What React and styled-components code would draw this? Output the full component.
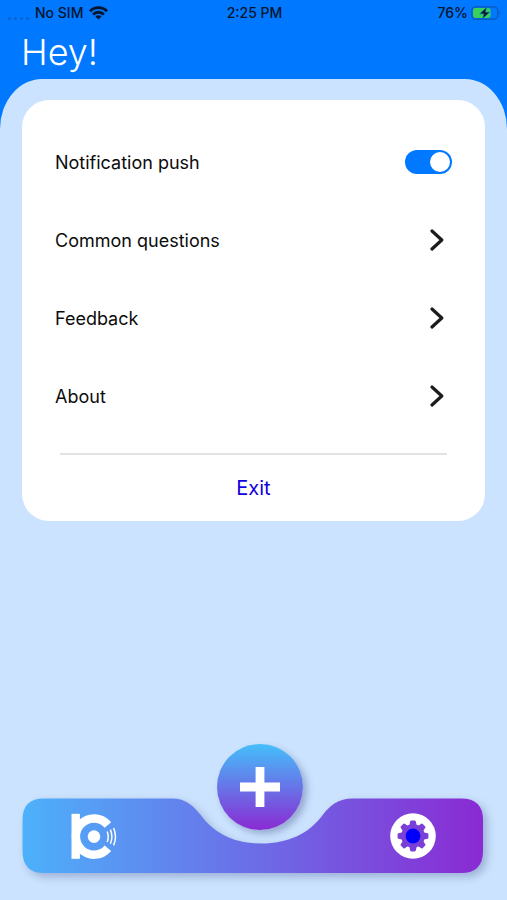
import React, { useState } from "react";
import styled, { createGlobalStyle } from "styled-components";

const LINKS = ["Common questions", "Feedback", "About"];

const Wifi = () => (
  <svg width="19" height="14" viewBox="0 0 19 14" aria-hidden="true">
    <g fill="none" stroke="#06142c" strokeWidth="2.8">
      <path d="M1 5.2 A12 12 0 0 1 18 5.2" />
      <path d="M4.1 8.5 A7.6 7.6 0 0 1 14.9 8.5" />
    </g>
    <path d="M6.4 10.5 A4.4 4.4 0 0 1 12.6 10.5 L9.5 13.6 Z" fill="#06142c" />
  </svg>
);

const Battery = () => (
  <svg width="30" height="14" viewBox="0 0 30 14" aria-hidden="true">
    <rect
      x="0.8"
      y="0.8"
      width="26"
      height="12.4"
      rx="3.6"
      fill="none"
      stroke="#0b57b4"
      strokeWidth="1.2"
    />
    <path d="M28.4 5 Q30 7 28.4 9 Z" fill="#0b57b4" />
    <rect x="2" y="2" width="17.6" height="10" rx="2.4" fill="#38d15c" />
    <path
      d="M15.6 1.4 L8.8 7.8 H13 L11.6 12.6 L18.6 6.2 H14.3 Z"
      fill="#06142c"
      stroke="#0b6fd0"
      strokeWidth="0.5"
    />
  </svg>
);

const Chevron = () => (
  <svg width="14" height="22" viewBox="0 0 14 22" aria-hidden="true">
    <path
      d="M2 2 L11.8 11 L2 20"
      fill="none"
      stroke="#1c1c1e"
      strokeWidth="3.2"
      strokeLinecap="round"
      strokeLinejoin="round"
    />
  </svg>
);

const Logo = () => (
  <svg width="46" height="46" viewBox="0 0 46 46" aria-hidden="true">
    <rect x="0.5" y="0.8" width="8.4" height="45" fill="#fff" />
    <path
      d="M36.9 12 A18.1 18.1 0 1 0 36.9 35.2"
      fill="none"
      stroke="#fff"
      strokeWidth="8.4"
    />
    <circle cx="23" cy="23.6" r="6.3" fill="#fff" />
    <g fill="none" stroke="#fff" strokeWidth="1.5">
      <path d="M36.2 18.4 A14.6 14.6 0 0 1 36.2 29" />
      <path d="M39.4 16.6 A18.4 18.4 0 0 1 39.4 30.8" />
      <path d="M42.6 15 A22 22 0 0 1 42.6 32.4" />
    </g>
  </svg>
);

const Gear = () => (
  <svg width="46" height="46" viewBox="0 0 46 46" aria-hidden="true">
    <circle cx="23" cy="23" r="22.8" fill="#fff" />
    <g fill="#7a3fd9">
      <circle cx="23" cy="23" r="11.8" />
      {[0, 45, 90, 135, 180, 225, 270, 315].map((angle) => (
        <path
          key={angle}
          d="M19.2 13 L20.2 8.4 Q20.4 7.6 21.2 7.6 H24.8 Q25.6 7.6 25.8 8.4 L26.8 13 Z"
          transform={`rotate(${angle} 23 23)`}
        />
      ))}
    </g>
    <circle cx="23" cy="23" r="7.4" fill="#0000fa" />
  </svg>
);

const Plus = () => (
  <svg width="40" height="40" viewBox="0 0 40 40" aria-hidden="true">
    <path d="M15.6 0 H24.4 V15.6 H40 V24.4 H24.4 V40 H15.6 V24.4 H0 V15.6 H15.6 Z" fill="#fff" />
  </svg>
);

const BottomNav = () => (
  <NavWrapper>
    <NavShape viewBox="0 0 461 75" preserveAspectRatio="xMinYMid meet" aria-hidden="true">
      <defs>
        <linearGradient id="bar" x1="0" x2="1" y1="0" y2="0">
          <stop offset="0" stopColor="#4db1fb" />
          <stop offset="1" stopColor="#8a2ad3" />
        </linearGradient>
      </defs>
      <path
        d="M22 0.5 H150 C164 0.5 172 8 181 20 C194 36 213 45.5 239 45.5 C267 45.5 287 35 300 18 C308 7 316 0.5 331 0.5 H439 Q461 0.5 461 22 V53 Q461 75 439 75 H22 Q0.5 75 0.5 53 V22 Q0.5 0.5 22 0.5 Z"
        fill="url(#bar)"
      />
    </NavShape>
    <NavButton type="button" aria-label="Home">
      <Logo />
    </NavButton>
    <AddButton type="button" aria-label="Add">
      <Plus />
    </AddButton>
    <NavButton type="button" aria-label="Settings">
      <Gear />
    </NavButton>
  </NavWrapper>
);

const App = () => {
  const [push, setPush] = useState(true);

  return (
    <>
      <GlobalStyle />
      <Screen>
        <StatusBar>
          <StatusGroup>
            <SignalDots>
              <i />
              <i />
              <i />
              <i />
            </SignalDots>
            <span>No SIM</span>
            <Wifi />
          </StatusGroup>
          <span>2:25 PM</span>
          <StatusGroup $end>
            <span>76%</span>
            <Battery />
          </StatusGroup>
        </StatusBar>
        <Title>Hey!</Title>
        <Sheet>
          <Card>
            <ToggleRow>
              <label htmlFor="push">Notification push</label>
              <Switch
                id="push"
                type="checkbox"
                role="switch"
                checked={push}
                onChange={(e) => setPush(e.target.checked)}
              />
            </ToggleRow>
            {LINKS.map((label) => (
              <LinkRow key={label} href="#">
                {label}
                <Chevron />
              </LinkRow>
            ))}
            <Divider />
            <ExitButton type="button">Exit</ExitButton>
          </Card>
          <BottomNav />
        </Sheet>
      </Screen>
    </>
  );
};

const GlobalStyle = createGlobalStyle`
  * {
    box-sizing: border-box;
  }

  body {
    margin: 0;
    background: #0078ff;
    font-family: Inter, "Liberation Sans", sans-serif;
  }

  button {
    padding: 0;
    border: none;
    background: none;
    font-family: inherit;
    cursor: pointer;
  }

  svg {
    display: block;
  }
`;

const Screen = styled.div`
  min-height: 100vh;
  display: flex;
  flex-direction: column;
  background: #0078ff;
`;

const StatusBar = styled.div`
  display: grid;
  grid-template-columns: 1fr auto 1fr;
  align-items: center;
  height: 25px;
  padding: 0 6px 0 8px;
  color: #06142c;
  font-size: 14px;
  font-weight: 500;
`;

const StatusGroup = styled.div`
  display: flex;
  align-items: center;
  justify-content: ${({ $end }) => ($end ? "flex-end" : "flex-start")};
  gap: ${({ $end }) => ($end ? "3px" : "6px")};
`;

const SignalDots = styled.span`
  display: flex;
  align-self: flex-end;
  gap: 3px;
  padding-bottom: 1px;

  & i {
    width: 3px;
    height: 3px;
    border-radius: 50%;
    background: #0a62cc;
  }
`;

const Title = styled.h1`
  margin: 0;
  padding: 0 21px;
  color: #fff;
  font-size: 36px;
  font-weight: 300;
  line-height: 54px;
`;

const Sheet = styled.main`
  flex: 1;
  display: flex;
  flex-direction: column;
  justify-content: space-between;
  padding: 21px 22px 27px;
  border-radius: 42px 42px 0 0 / 50px 50px 0 0;
  background: #cbe3fe;
`;

const Card = styled.section`
  display: flex;
  flex-direction: column;
  padding: 23px 33px 0;
  border-radius: 27px;
  background: #fff;
`;

const ToggleRow = styled.div`
  display: flex;
  align-items: center;
  justify-content: space-between;
  height: 78px;
  color: #0c0c0c;
  font-size: 18px;
`;

const LinkRow = styled.a`
  display: flex;
  align-items: center;
  justify-content: space-between;
  height: 78px;
  padding-right: 8px;
  color: #0c0c0c;
  font-size: 18px;
  text-decoration: none;
`;

const Switch = styled.input`
  appearance: none;
  display: flex;
  align-items: center;
  width: 47px;
  height: 24px;
  margin: 0;
  padding: 2px;
  border-radius: 12px;
  background: #c7c7cc;
  cursor: pointer;

  &::before {
    content: "";
    width: 20px;
    height: 20px;
    border-radius: 50%;
    background: #fff;
  }

  &:checked {
    justify-content: flex-end;
    background: #0078ff;
  }
`;

const Divider = styled.hr`
  align-self: stretch;
  height: 2px;
  margin: 18px 5px 0;
  border: none;
  background: #e2e2e2;
`;

const ExitButton = styled.button`
  height: 66px;
  color: #1200dc;
  font-size: 20px;
`;

const NavWrapper = styled.nav`
  position: relative;
  display: flex;
  align-items: center;
  justify-content: space-between;
  height: 75px;
  padding: 0 49px;
`;

const NavShape = styled.svg`
  position: absolute;
  inset: 0;
  width: 100%;
  height: 100%;
  overflow: visible;
  filter: drop-shadow(4px 4px 4px rgba(70, 80, 140, 0.35));
`;

const NavButton = styled.button`
  position: relative;
`;

/* floats over the notch of the bar */
const AddButton = styled.button`
  position: absolute;
  bottom: 43px;
  left: calc(50% - 37px);
  display: flex;
  align-items: center;
  justify-content: center;
  width: 86px;
  height: 86px;
  border-radius: 50%;
  background: linear-gradient(#45bffb, #8a2ad3);
  box-shadow: 4px 4px 7px rgba(70, 80, 140, 0.4);
`;

export default App;
